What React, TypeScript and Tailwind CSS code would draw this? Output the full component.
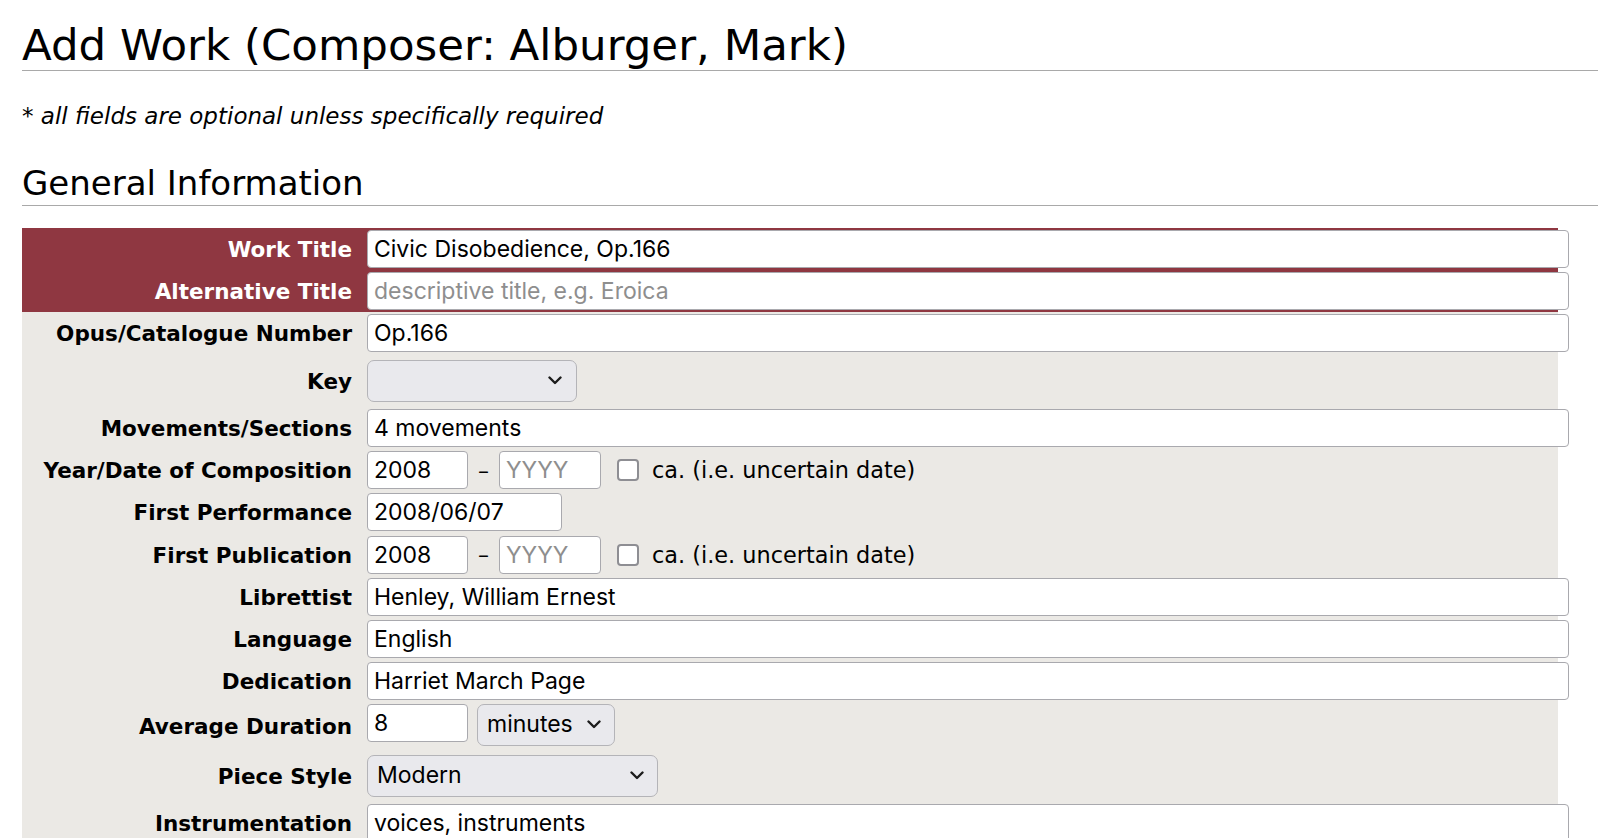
import React from "react";

// one row of the form table: label on the left, fields on the right
interface RowProps {
  label: string;
  red?: boolean;
  h: string;
  children: React.ReactNode;
}

const Row: React.FC<RowProps> = ({ label, red, h, children }) => (
  <div className={`flex ${h} ${red ? "bg-[#8f3741] text-white" : "bg-[#ebe9e5] text-black"}`}>
    <div className="w-[338px] shrink-0 flex items-center justify-end pr-[8px] pt-[3px] font-bold text-[21.5px]">
      {label}
    </div>
    <div className="flex items-center pl-[7px] text-black">{children}</div>
  </div>
);

const Field = ({
  value,
  placeholder,
  w = "w-[1202px]",
}: {
  value?: string;
  placeholder?: string;
  w?: string;
}) => (
  <input
    type="text"
    defaultValue={value}
    placeholder={placeholder}
    className={`${w} h-[38px] shrink-0 rounded-[4px] border border-[#a9a9ae] bg-white pl-[6px] font-['Inter',sans-serif] text-[23px] text-black outline-none placeholder:text-[#8e8e8e]`}
  />
);

const Chevron = () => (
  <svg width="14" height="9" viewBox="0 0 14 9" fill="none">
    <path d="M1.5 1.5 L7 7 L12.5 1.5" stroke="#1c1c1c" strokeWidth="2.4" strokeLinecap="round" strokeLinejoin="round" />
  </svg>
);

const Select = ({ value, w, pr }: { value?: string; w: string; pr: string }) => (
  <button
    type="button"
    className={`${w} ${pr} h-[42px] shrink-0 flex items-center justify-between rounded-[7px] border border-[#b4b4b8] bg-[#e9e9ed] pl-[9px] font-['Inter',sans-serif] text-[23px] text-black`}
  >
    <span>{value}</span>
    <Chevron />
  </button>
);

const YearRange = ({ from }: { from: string }) => (
  <>
    <Field value={from} w="w-[101px]" />
    <span className="mx-[10px] text-[22px]">–</span>
    <Field placeholder="YYYY" w="w-[102px]" />
    <input
      type="checkbox"
      className="ml-[16px] h-[22px] w-[22px] appearance-none rounded-[4px] border-2 border-[#8e8e93] bg-white"
    />
    <span className="ml-[13px] pt-[2px] text-[22.4px]">ca. (i.e. uncertain date)</span>
  </>
);

export default function App() {
  return (
    <div className="min-h-screen bg-white pl-[22px] font-['DejaVu_Sans',sans-serif] text-black overflow-hidden">
      <h1 className="mt-[20px] border-b border-[#a9a9a9] text-[43.5px] leading-[50px] font-normal">
        Add Work (Composer: Alburger, Mark)
      </h1>
      <p className="mt-[30px] text-[23px] italic leading-[30px]">
        * all fields are optional unless specifically required
      </p>
      <h2 className="mt-[32px] border-b border-[#a9a9a9] pb-[2px] text-[34px] leading-[40px] font-normal">
        General Information
      </h2>

      <div className="mt-[22px] w-[1536px]">
        <Row label="Work Title" red h="h-[42px]">
          <Field value="Civic Disobedience, Op.166" />
        </Row>
        <Row label="Alternative Title" red h="h-[42px]">
          <Field placeholder="descriptive title, e.g. Eroica" />
        </Row>
        <Row label="Opus/Catalogue Number" h="h-[42px]">
          <Field value="Op.166" />
        </Row>
        <Row label="Key" h="h-[53px]">
          <Select w="w-[210px]" pr="pr-[14px]" />
        </Row>
        <Row label="Movements/Sections" h="h-[42px]">
          <Field value="4 movements" />
        </Row>
        <Row label="Year/Date of Composition" h="h-[42px]">
          <YearRange from="2008" />
        </Row>
        <Row label="First Performance" h="h-[42px]">
          <Field value="2008/06/07" w="w-[195px]" />
        </Row>
        <Row label="First Publication" h="h-[43px]">
          <YearRange from="2008" />
        </Row>
        <Row label="Librettist" h="h-[42px]">
          <Field value="Henley, William Ernest" />
        </Row>
        <Row label="Language" h="h-[42px]">
          <Field value="English" />
        </Row>
        <Row label="Dedication" h="h-[42px]">
          <Field value="Harriet March Page" />
        </Row>
        <Row label="Average Duration" h="h-[47px]">
          <div className="flex items-start gap-[9px] pb-[2px]">
            <Field value="8" w="w-[101px]" />
            <Select value="minutes" w="w-[138px]" pr="pr-[13px]" />
          </div>
        </Row>
        <Row label="Piece Style" h="h-[53px]">
          <Select value="Modern" w="w-[291px]" pr="pr-[13px]" />
        </Row>
        <Row label="Instrumentation" h="h-[42px]">
          <Field value="voices, instruments" />
        </Row>
      </div>
    </div>
  );
}
